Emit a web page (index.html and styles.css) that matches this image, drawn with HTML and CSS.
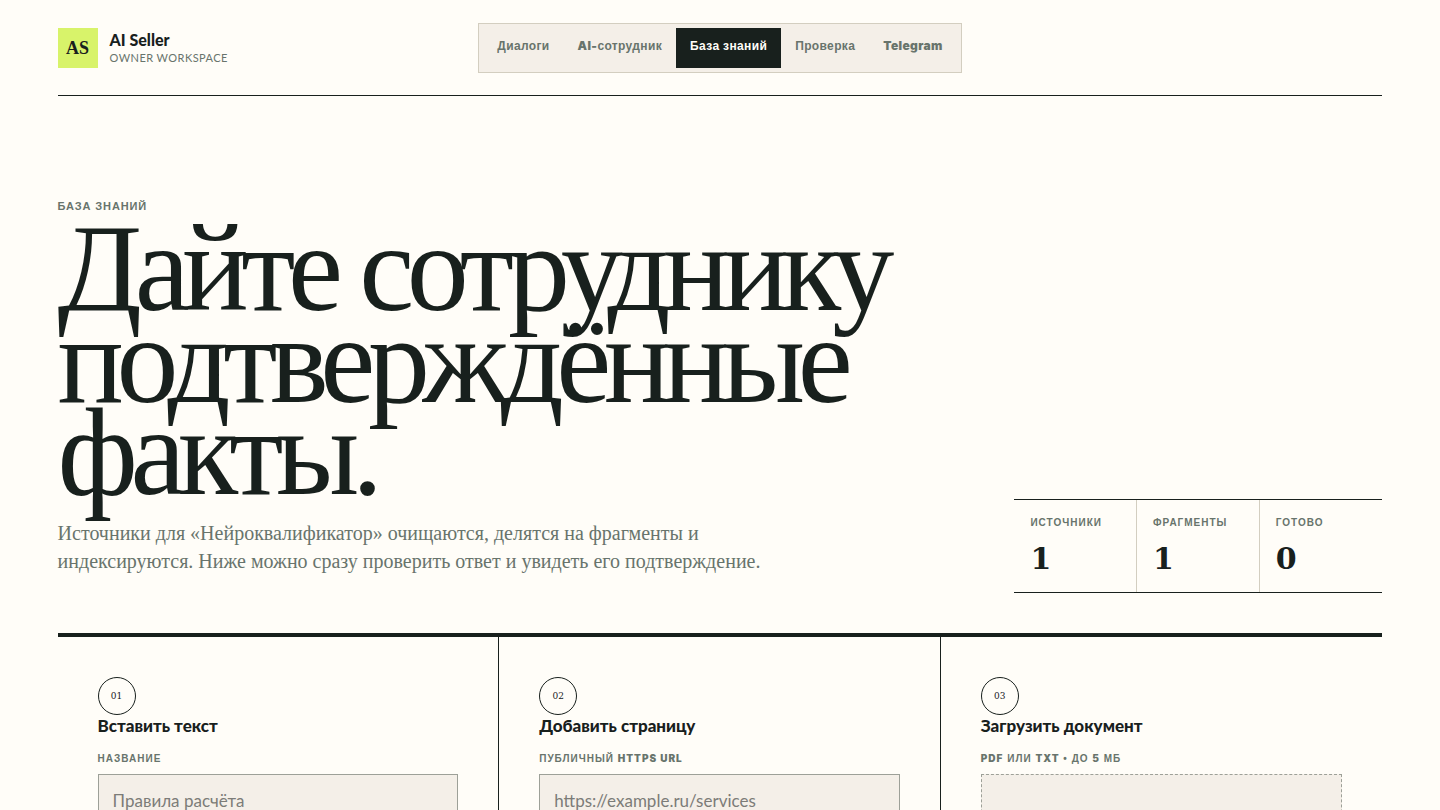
FILE: index.html
```html
<!DOCTYPE html>
<html lang="ru">

<head>
    <meta charset="UTF-8">
    <meta name="viewport" content="width=device-width, initial-scale=1.0">
    <title>База знаний - AI Seller</title>
    <link rel="stylesheet" href="styles.css">
</head>

<body>
    <header class="topbar">
        <a class="brand" href="#">
            <span class="brand-mark">AS</span>
            <span class="brand-text">
                <strong>AI Seller</strong>
                <small>OWNER WORKSPACE</small>
            </span>
        </a>
        <nav class="nav">
            <a href="#">Диалоги</a>
            <a href="#"><b>AI-</b>сотрудник</a>
            <a class="active" href="#" aria-current="page">База знаний</a>
            <a href="#">Проверка</a>
            <a href="#"><b>Telegram</b></a>
        </nav>
    </header>

    <main>
        <section class="hero">
            <div class="hero-text">
                <p class="eyebrow">БАЗА ЗНАНИЙ</p>
                <h1>Дайте сотруднику подтверждённые факты.</h1>
                <p class="lead">Источники для «Нейроквалификатор» очищаются, делятся на фрагменты и индексируются. Ниже можно сразу проверить ответ и увидеть его подтверждение.</p>
            </div>
            <dl class="stats">
                <div>
                    <dt>ИСТОЧНИКИ</dt>
                    <dd>1</dd>
                </div>
                <div>
                    <dt>ФРАГМЕНТЫ</dt>
                    <dd>1</dd>
                </div>
                <div>
                    <dt>ГОТОВО</dt>
                    <dd>0</dd>
                </div>
            </dl>
        </section>

        <section class="sources">
            <form class="source">
                <span class="step">01</span>
                <h2>Вставить текст</h2>
                <label for="sourceTitle">НАЗВАНИЕ</label>
                <input type="text" id="sourceTitle" placeholder="Правила расчёта">
            </form>
            <form class="source">
                <span class="step">02</span>
                <h2>Добавить страницу</h2>
                <label for="sourceUrl">ПУБЛИЧНЫЙ <b>HTTPS URL</b></label>
                <input type="url" id="sourceUrl" placeholder="https://example.ru/services">
            </form>
            <form class="source">
                <span class="step">03</span>
                <h2>Загрузить документ</h2>
                <label for="sourceFile"><b>PDF</b> ИЛИ <b>TXT</b> • ДО <b>5</b> МБ</label>
                <input class="dropzone" type="file" id="sourceFile" accept=".pdf,.txt">
            </form>
        </section>
    </main>
</body>

</html>
```

FILE: styles.css
```css
:root {
    --paper: #fffdf8;
    --panel: #f4efe8;
    --ink: #18201d;
    --muted: #68746c;
    --line: #d3cec0;
    --lime: #d8f36a;
    --serif: "Liberation Serif", serif;
    --sans: Lato, "Open Sans", sans-serif;
    --label: "Liberation Sans", sans-serif;
}

* {
    box-sizing: border-box;
}

body {
    margin: 0;
    padding: 0 4vw;
    background: var(--paper);
    color: var(--ink);
    font-family: var(--sans);
}

a {
    color: inherit;
    text-decoration: none;
}

/* header */
.topbar {
    display: grid;
    grid-template-columns: 1fr auto 1fr;
    align-items: center;
    padding: 23px 0 22px;
    border-bottom: 1px solid var(--ink);
}

.brand {
    display: flex;
    align-items: center;
    gap: 12px;
}

.brand-mark {
    display: grid;
    place-items: center;
    width: 40px;
    height: 40px;
    background: var(--lime);
    font: bold 18px var(--serif);
}

.brand-text {
    display: grid;
}

.brand-text strong {
    font-size: 16px;
    line-height: 20px;
    font-weight: 900;
}

.brand-text small {
    color: var(--muted);
    font-size: 11px;
    line-height: 16px;
    letter-spacing: 0.04em;
}

.nav {
    display: flex;
    padding: 4px;
    border: 1px solid var(--line);
    background: var(--panel);
}

.nav a {
    padding: 10px 14px 14px;
    color: var(--muted);
    font: bold 12px/16px var(--label);
    letter-spacing: 0.03em;
}

.nav b,
.source label b {
    font-family: Inter, sans-serif;
    font-weight: 900;
    line-height: 1;
}

.nav .active {
    background: var(--ink);
    color: var(--paper);
}

/* hero */
.hero {
    display: grid;
    grid-template-columns: minmax(0, 1fr) 368px;
    align-items: end;
    gap: 48px;
    padding: 102px 0 40px;
    border-bottom: 4px solid var(--ink);
}

.eyebrow,
.stats dt,
.source label {
    margin: 0;
    color: var(--muted);
    font: bold 10px/16px var(--label);
    letter-spacing: 0.1em;
}

.eyebrow {
    font-size: 11px;
    letter-spacing: 0.08em;
}

h1 {
    margin: 9px 0 0;
    font: 124px/92px var(--serif);
    letter-spacing: -0.06em;
}

.lead {
    max-width: 720px;
    margin: 20px 0 18px;
    color: var(--muted);
    font: 20px/28px var(--serif);
}

.stats {
    display: grid;
    grid-template-columns: repeat(3, 1fr);
    margin: 0;
    border-top: 1px solid var(--ink);
    border-bottom: 1px solid var(--ink);
}

.stats div {
    padding: 15px 16px 13px;
}

.stats div:not(:last-child) {
    border-right: 1px solid var(--line);
}

.stats dd {
    margin: 8px 0 0;
    font: bold 30px/40px "DejaVu Serif", serif;
}

/* sources */
.sources {
    display: grid;
    grid-template-columns: repeat(3, 1fr);
}

.source {
    display: flex;
    flex-direction: column;
    padding: 40px;
}

.source:not(:last-child) {
    border-right: 1px solid var(--ink);
}

.step {
    display: grid;
    place-items: center;
    width: 38px;
    height: 38px;
    border: 1px solid var(--ink);
    border-radius: 50%;
    font: 9px "DejaVu Serif", serif;
}

.source h2 {
    margin: 0 0 14px;
    font-size: 17px;
    line-height: 22px;
    font-weight: 900;
}

.source input {
    width: 100%;
    height: 52px;
    margin-top: 7px;
    padding: 0 14px;
    border: 1px solid #9da098;
    border-radius: 0;
    background: var(--panel);
    color: var(--ink);
    font: 17px var(--sans);
}

.source input::placeholder {
    color: #7c7c78;
}

.source .dropzone {
    height: 140px;
    padding: 60px 20px;
    border-style: dashed;
}
```
